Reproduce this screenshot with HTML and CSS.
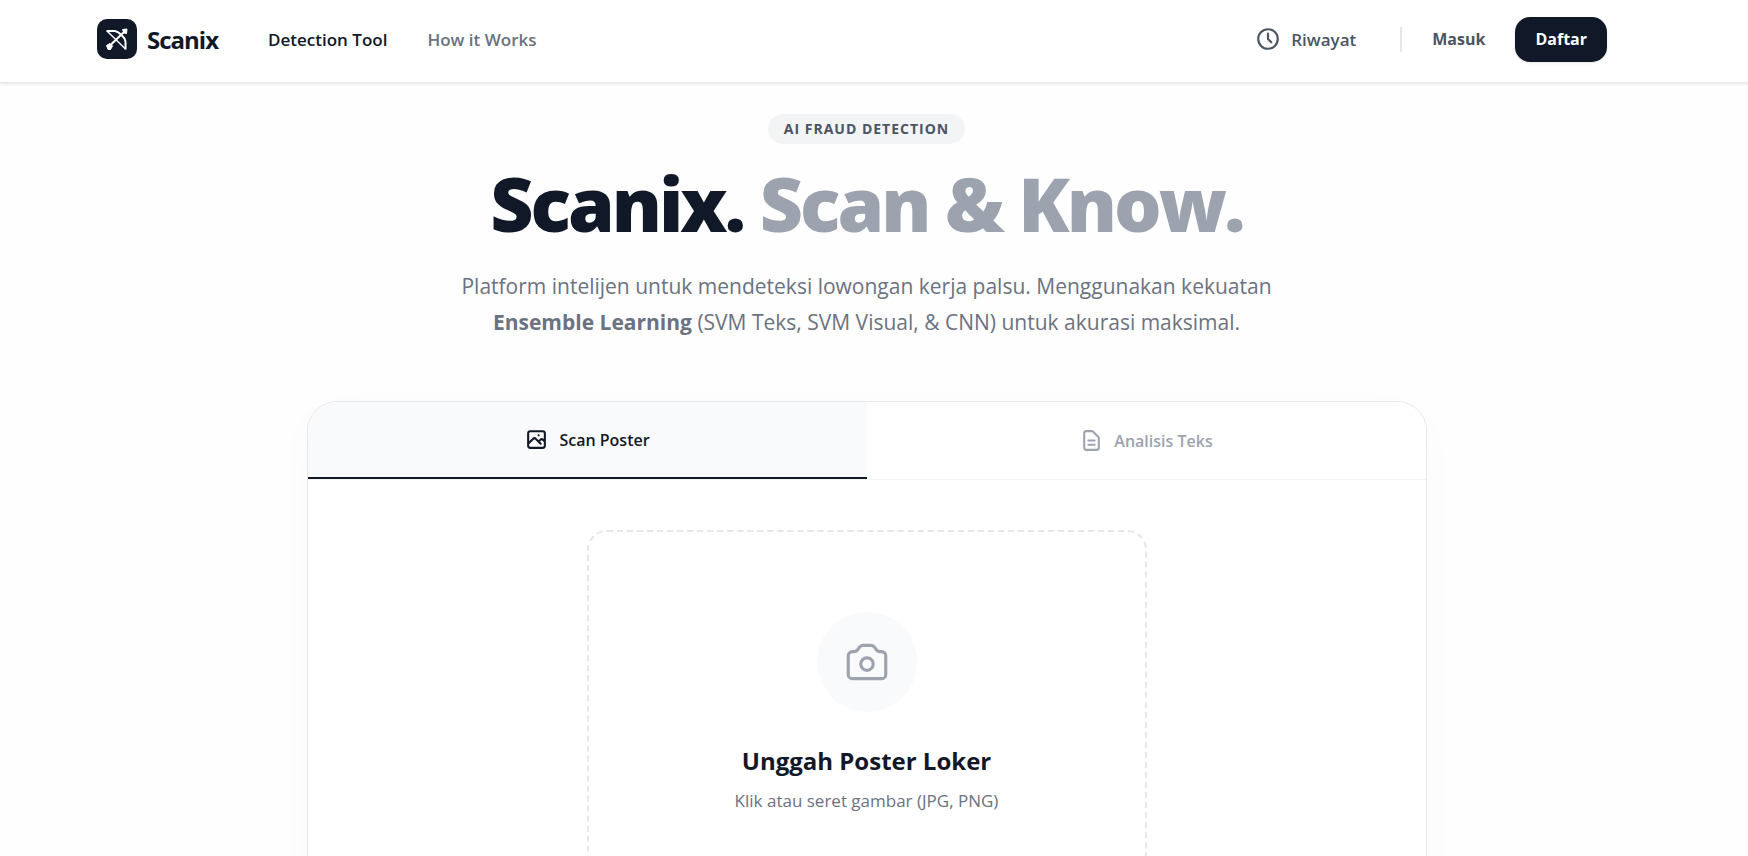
FILE: index.html
```html
<!DOCTYPE html>
<html lang="id">
<head>
  <meta charset="UTF-8">
  <meta name="viewport" content="width=device-width, initial-scale=1.0">
  <title>Scanix</title>
  <link rel="stylesheet" href="styles.css">
</head>
<body>

<header class="navbar">
  <div class="nav-inner">
    <a href="#" class="brand">
      <span class="brand-icon">
        <svg viewBox="0 0 24 24" fill="none" stroke="currentColor" stroke-linejoin="round">
          <path stroke-width="2" d="M1.500 4H10c4 1 10 6 10.500 10.500V22.500"/>
          <path stroke-width="1.400" d="M2 4 20.500 22"/>
          <path stroke-width="2" d="M5 18.500 20 4"/>
          <path stroke-width="1" fill="currentColor" d="M17.500 2.500 22 2l-.5 4.500-2.500-.5zM1.500 18.500l3.500-2 2.500 2.500-2 3.500H3z"/>
        </svg>
      </span>
      <span class="brand-name">Scanix</span>
    </a>
    <nav class="nav-links">
      <a href="#tool" class="active">Detection Tool</a>
      <a href="#how">How it Works</a>
    </nav>
    <div class="nav-actions">
      <a href="#history" class="history">
        <svg viewBox="0 0 24 24" fill="none" stroke="currentColor" stroke-width="2" stroke-linecap="round" stroke-linejoin="round">
          <path d="M12 7v5l3 3m6-3a9 9 0 1 1-18 0 9 9 0 0 1 18 0z"/>
        </svg>
        Riwayat
      </a>
      <span class="divider"></span>
      <a href="#login" class="login">Masuk</a>
      <button type="button" class="signup">Daftar</button>
    </div>
  </div>
</header>

<main id="tool">
  <section class="hero">
    <span class="badge">AI FRAUD DETECTION</span>
    <h1>Scanix. <span>Scan &amp; Know.</span></h1>
    <p>Platform intelijen untuk mendeteksi lowongan kerja palsu. Menggunakan kekuatan<br>
      <strong>Ensemble Learning</strong> (SVM Teks, SVM Visual, &amp; CNN) untuk akurasi maksimal.</p>
  </section>

  <section class="card">
    <div class="tabs">
      <button type="button" class="tab active">
        <svg viewBox="0 0 24 24" fill="none" stroke="currentColor" stroke-width="2" stroke-linecap="round" stroke-linejoin="round">
          <path d="M4 16l4.586-4.586a2 2 0 0 1 2.828 0L16 16m-2-2l1.586-1.586a2 2 0 0 1 2.828 0L20 14m-6-6h.01M6 20h12a2 2 0 0 0 2-2V6a2 2 0 0 0-2-2H6a2 2 0 0 0-2 2v12a2 2 0 0 0 2 2z"/>
        </svg>
        Scan Poster
      </button>
      <button type="button" class="tab">
        <svg viewBox="0 0 24 24" fill="none" stroke="currentColor" stroke-width="2" stroke-linecap="round" stroke-linejoin="round">
          <path d="M9 12h6m-6 4h6m2 5H7a2 2 0 0 1-2-2V5a2 2 0 0 1 2-2h5.586a1 1 0 0 1 .707.293l5.414 5.414a1 1 0 0 1 .293.707V19a2 2 0 0 1-2 2z"/>
        </svg>
        Analisis Teks
      </button>
    </div>
    <div class="card-body">
      <button type="button" class="dropzone">
        <span class="camera">
          <svg viewBox="0 0 24 24" fill="none" stroke="currentColor" stroke-width="1.500" stroke-linecap="round" stroke-linejoin="round">
            <path d="M3 9a2 2 0 0 1 2-2h.93a2 2 0 0 0 1.664-.89l.812-1.220A2 2 0 0 1 10.070 4h3.860a2 2 0 0 1 1.664.89l.812 1.220A2 2 0 0 0 18.070 7H19a2 2 0 0 1 2 2v9a2 2 0 0 1-2 2H5a2 2 0 0 1-2-2V9z"/>
            <circle cx="12" cy="13" r="3"/>
          </svg>
        </span>
        <span class="drop-title">Unggah Poster Loker</span>
        <span class="drop-hint">Klik atau seret gambar (JPG, PNG)</span>
      </button>
    </div>
  </section>
</main>

</body>
</html>
```
FILE: styles.css
```css
* {
  box-sizing: border-box;
}
body {
  margin: 0;
  font-family: "Segoe UI", "Open Sans", "Noto Sans", sans-serif;
  font-size: 17px;
  background-color: #fefefe;
  color: #111827;
}
a {
  color: inherit;
  text-decoration: none;
}
button {
  font-family: inherit;
  cursor: pointer;
}
.navbar {
  background-color: #fff;
  border-bottom: 1px solid #e5e7eb;
  box-shadow: 0 1px 3px rgba(0, 0, 0, 0.1);
}
.nav-inner {
  display: flex;
  align-items: center;
  height: 82px;
  padding: 0 141px 4px 97px;
}
.brand {
  display: flex;
  align-items: center;
  gap: 10px;
  margin-right: 50px;
}
.brand-icon {
  display: flex;
  align-items: center;
  justify-content: center;
  width: 40px;
  height: 40px;
  border-radius: 10px;
  background-color: #111827;
  color: #fff;
}
.brand-icon svg {
  width: 24px;
  height: 24px;
}
.brand-name {
  font-size: 24px;
  font-weight: 700;
  letter-spacing: -1px;
}
.nav-links {
  display: flex;
  gap: 40px;
  font-weight: 600;
  color: #6b7280;
}
.nav-links .active {
  color: #111827;
}
.nav-actions {
  display: flex;
  align-items: center;
  margin-left: auto;
  font-weight: 600;
  color: #4b5563;
}
.history {
  display: flex;
  align-items: center;
  gap: 10px;
}
.history svg {
  width: 26px;
  height: 26px;
}
.divider {
  width: 2px;
  height: 25px;
  margin: 0 30px 0 44px;
  background-color: #e5e7eb;
}
.login {
  margin-right: 30px;
  font-size: 16px;
  font-weight: 700;
}
.signup {
  height: 45px;
  padding: 0 20px;
  border: none;
  border-radius: 15px;
  background-color: #111827;
  color: #fff;
  font-size: 16px;
  font-weight: 700;
  box-shadow: 0 1px 3px rgba(0, 0, 0, 0.1);
}

main {
  padding: 31px 15px 0 0;
}
.hero {
  text-align: center;
}
.badge {
  display: inline-block;
  padding: 0 16px;
  border-radius: 15px;
  background-color: #f3f4f6;
  color: #4b5563;
  font-size: 14px;
  font-weight: 700;
  line-height: 30px;
  letter-spacing: 1px;
}
.hero h1 {
  margin: 12px 0 0;
  font-size: 75px;
  font-weight: 800;
  line-height: 94px;
  letter-spacing: -3px;
}
.hero h1 span {
  color: #9ca3af;
}
.hero p {
  margin: 18px 0 0;
  color: #6b7280;
  font-size: 21px;
  line-height: 36px;
}

.card {
  max-width: 1120px;
  margin: 61px auto 0;
  overflow: hidden;
  border: 1px solid #e5e7eb;
  border-radius: 30px;
  background-color: #fff;
  box-shadow: 0 10px 40px rgba(0, 0, 0, 0.02);
}
.tabs {
  display: grid;
  grid-template-columns: 1fr 1fr;
  border-bottom: 1px solid #f3f4f6;
}
.tab {
  display: flex;
  align-items: center;
  justify-content: center;
  gap: 10px;
  height: 77px;
  padding: 0;
  border: none;
  background-color: #fff;
  color: #9ca3af;
  font-size: 16px;
  font-weight: 600;
}
.tab.active {
  border-bottom: 2px solid #111827;
  background-color: #f9fafb;
  color: #111827;
}
.tab svg {
  width: 25px;
  height: 25px;
}
.card-body {
  display: flex;
  justify-content: center;
  padding: 50px;
}
.dropzone {
  display: flex;
  flex-direction: column;
  align-items: center;
  width: 560px;
  padding: 80px 40px;
  border: 2px dashed #e5e7eb;
  border-radius: 20px;
  background-color: #fff;
}
.camera {
  display: flex;
  align-items: center;
  justify-content: center;
  width: 100px;
  height: 100px;
  border-radius: 50%;
  background-color: #f9fafb;
  color: #9ca3af;
}
.camera svg {
  width: 50px;
  height: 50px;
}
.drop-title {
  margin-top: 29px;
  color: #111827;
  font-size: 24px;
  font-weight: 700;
  line-height: 40px;
}
.drop-hint {
  margin-top: 5px;
  color: #6b7280;
  font-size: 17px;
  line-height: 30px;
}
```
